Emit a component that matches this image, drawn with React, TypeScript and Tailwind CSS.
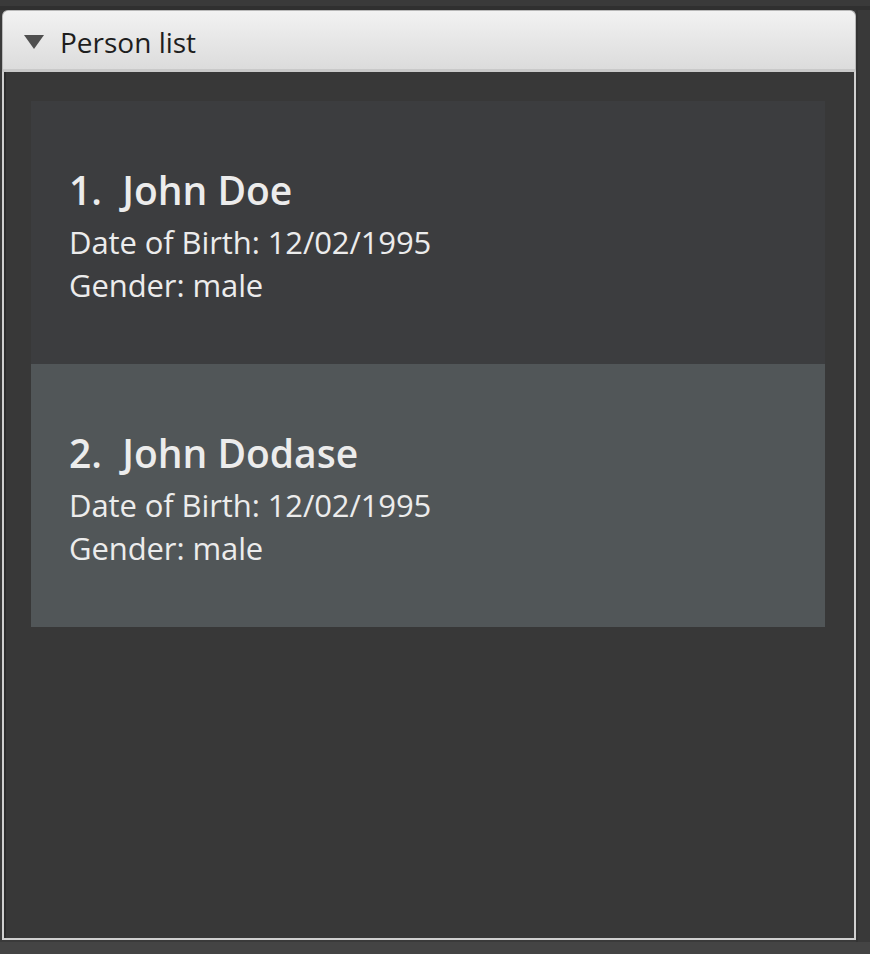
import { FC } from "react";

interface Person {
	name: string;
	dob: string;
	gender: string;
}

const people: Person[] = [
	{ name: "John Doe", dob: "12/02/1995", gender: "male" },
	{ name: "John Dodase", dob: "12/02/1995", gender: "male" },
];

const font = { fontFamily: '"Open Sans", "Noto Sans", sans-serif' };

const PersonCard: FC<{ person: Person; index: number }> = ({ person, index }) => {
	const shade = index % 2 === 0 ? "bg-[#3c3d3f]" : "bg-[#515658]";
	return (
		<article className={`${shade} h-[263px] pl-[38px] pt-[67px] text-[#ececec]`}>
			<h2 className="text-[39px] font-semibold leading-[44px] whitespace-pre">
				{`${index + 1}.  ${person.name}`}
			</h2>
			<p className="text-[31px] leading-[43px] mt-[9px] tracking-[-0.1px]">Date of Birth: {person.dob}</p>
			<p className="text-[31px] leading-[43px] tracking-[-0.1px]">Gender: {person.gender}</p>
		</article>
	);
};

export default function App() {
	return (
		<div className="w-[870px] h-[954px] bg-[#3a3a3a] flex flex-col" style={font}>
			<div className="h-[6px] bg-[#3a3a3a]" />
			<div className="h-[4px] bg-[#303030]" />
			<div className="flex flex-1 min-h-0">
				<section className="w-[856px] pl-[2px] flex flex-col">
					<header className="h-[62px] rounded-t-[6px] border border-[#b8b8b8] border-b-[3px] border-b-[#c9c9c9] bg-gradient-to-b from-[#f2f2f2] to-[#dcdcdc] flex items-center pl-[20px] pt-[3px]">
						<svg width="22" height="16" viewBox="0 0 22 16" className="mr-[15px]">
							<polygon points="1,1 21,1 11,15" fill="#4f4f4f" />
						</svg>
						<span className="text-[28px] text-[#1e1e1e]">Person list</span>
					</header>
					<div className="h-[868px] border-x-2 border-b-2 border-[#d0d0d0] bg-[#383838]">
						<div className="h-full border-l-2 border-[#2c2c2c] pl-[25px] pr-[29px] pt-[29px]">
							{people.map((p, i) => (
								<PersonCard key={p.name} person={p} index={i} />
							))}
						</div>
					</div>
				</section>
				<div className="flex-1 bg-[#393939] border-l-[2px] border-[#333333]" />
			</div>
			<div className="h-[12px] bg-[#444444]" />
		</div>
	);
}
